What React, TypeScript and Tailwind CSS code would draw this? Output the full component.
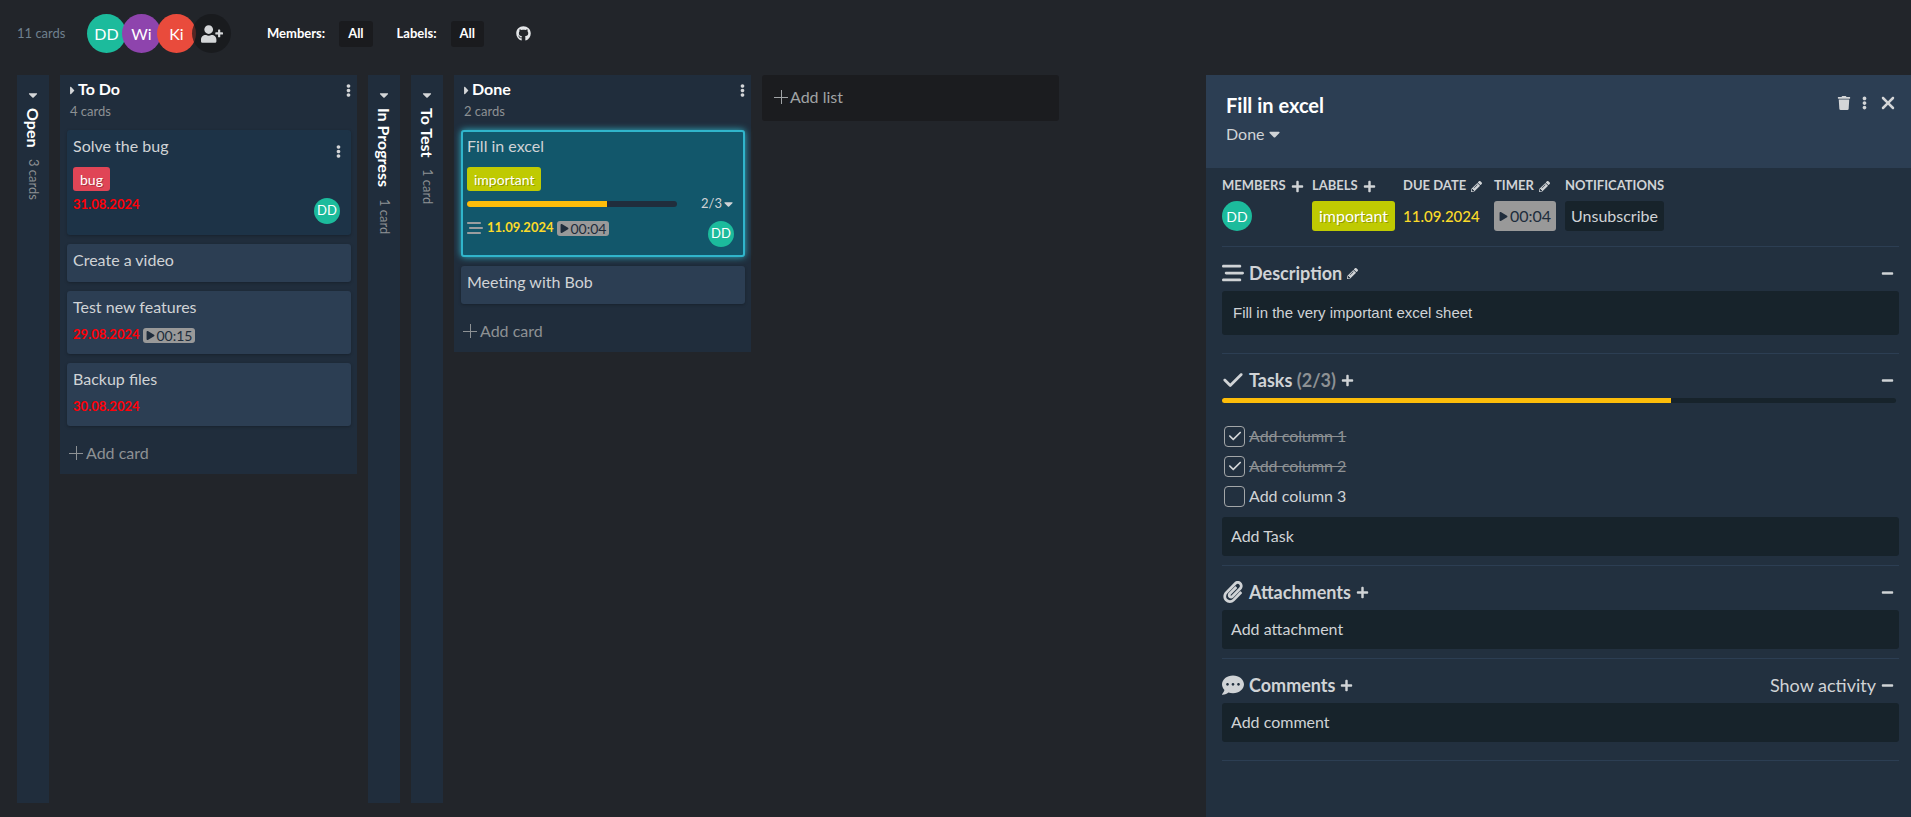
import type { ReactNode } from "react";
import clsx from "clsx";
import { FaCaretDown, FaCaretRight, FaCommentDots, FaEllipsisV, FaGithub, FaMinus, FaPaperclip, FaPencilAlt, FaPlay, FaPlus, FaTrash, FaUserPlus } from "react-icons/fa";
import { FaBarsStaggered, FaCheck, FaXmark } from "react-icons/fa6";

interface CardData {
  title: string;
  label?: { name: string; className: string };
  progress?: { done: number; total: number };
  hasDescription?: boolean;
  dueDate?: string;
  dueClass?: string;
  timer?: string;
  member?: string;
  menu?: boolean;
  variant?: "default" | "hover" | "active";
}

const IMPORTANT = { name: "important", className: "bg-[#bfca02]" };

const TODO_CARDS: CardData[] = [
  {
    title: "Solve the bug",
    label: { name: "bug", className: "bg-[#e04556]" },
    dueDate: "31.08.2024",
    dueClass: "text-[#ff0008]",
    member: "DD",
    menu: true,
    variant: "hover",
  },
  { title: "Create a video" },
  { title: "Test new features", dueDate: "29.08.2024", dueClass: "text-[#ff0008]", timer: "00:15" },
  { title: "Backup files", dueDate: "30.08.2024", dueClass: "text-[#ff0008]" },
];

const DONE_CARDS: CardData[] = [
  {
    title: "Fill in excel",
    label: IMPORTANT,
    progress: { done: 2, total: 3 },
    hasDescription: true,
    dueDate: "11.09.2024",
    dueClass: "text-[#fbdb29]",
    timer: "00:04",
    member: "DD",
    variant: "active",
  },
  { title: "Meeting with Bob" },
];

const TASKS = [
  { name: "Add column 1", done: true },
  { name: "Add column 2", done: true },
  { name: "Add column 3", done: false },
];

function ThinPlus() {
  return (
    <svg className="size-[14px] shrink-0" viewBox="0 0 14 14" fill="none" stroke="currentColor" strokeWidth="1" aria-hidden="true">
      <path d="M7.5 0v14M0 7.5h14" />
    </svg>
  );
}

function ProgressBar({ done, total, className }: { done: number; total: number; className: string }) {
  return (
    <div className={clsx("overflow-hidden rounded-full", className)}>
      <div className="h-full bg-[#fdbd0a]" style={{ width: `${(done / total) * 100}%` }} />
    </div>
  );
}

function Card({ card }: { card: CardData }) {
  const { title, label, progress, hasDescription, dueDate, dueClass, timer, member, menu, variant = "default" } = card;

  return (
    <article
      className={clsx(
        "rounded-[3px] border-2 px-1 pt-1",
        variant === "default" && "border-[#2c3e53] bg-[#2c3e53] pb-[7px] shadow-[0_1px_3px_rgba(0,0,0,0.25)]",
        variant === "hover" && "border-[#1d3347] bg-[#1d3347] pb-1.5 shadow-[0_1px_3px_rgba(0,0,0,0.25)]",
        variant === "active" && "border-[#30b5cb] bg-[#12576b] pb-[5px] shadow-[0_0_7px_#30b5cb]",
      )}
    >
      <div className={clsx("flex h-5 items-center justify-between", !dueDate && "mb-[3px]")}>
        <h3 className="text-base text-[#d0d3d6]">{title}</h3>
        {menu && (
          <button type="button" aria-label="Card actions" className="mt-2.5 mr-1 text-[13px] text-[#d4d6d8]">
            <FaEllipsisV className="w-[5px]" />
          </button>
        )}
      </div>

      {label && (
        <div className="mt-[11px] flex">
          <span className={clsx("flex h-6 items-center rounded-[3px] px-[7px] text-[14px] text-white [text-shadow:1px_1px_0_rgba(0,0,0,0.25)]", label.className)}>
            {label.name}
          </span>
        </div>
      )}

      {progress && (
        <div className="mt-[3px] flex h-5 items-center">
          <ProgressBar done={progress.done} total={progress.total} className="h-1.5 w-[210px] bg-[#202d3c]" />
          <button type="button" className="mr-1.5 ml-auto flex items-center gap-0.5 text-[13px] text-[#d0d3d6]">
            {progress.done}/{progress.total}
            <FaCaretDown className="w-[9px] text-[14px]" />
          </button>
        </div>
      )}

      {dueDate && (
        <div className={clsx("flex items-start", progress || label ? "mt-1" : "mt-2", member && "mb-[3px]")}>
          <div className="flex h-5 items-center gap-[3px]">
            {hasDescription && <FaBarsStaggered className="mr-px text-base text-[#9a9d9f]" />}
            <span className={clsx("text-[13px] font-bold", dueClass)}>{dueDate}</span>
            {timer && <Timer value={timer} className="h-[15px] px-[3px] text-[14px]" />}
          </div>
          {member && (
            <span className="mt-[3px] mr-[5px] ml-auto flex size-[26px] items-center justify-center rounded-full bg-[#1cbb9c] text-[13px] text-white">
              {member}
            </span>
          )}
        </div>
      )}
    </article>
  );
}

function Timer({ value, className }: { value: string; className: string }) {
  return (
    <button type="button" className={clsx("flex items-center gap-0.5 rounded-[3px] bg-[#999] text-[#202d3c]", className)}>
      <FaPlay className="size-[9px]" />
      {value}
    </button>
  );
}

function List({ name, cards }: { name: string; cards: CardData[] }) {
  return (
    <section className="w-[297px] shrink-0 self-start bg-[#202d3c] pr-1.5 pl-[7px]">
      <header className="h-[55px] pt-[5px] pl-[3px]">
        <div className="flex h-5 items-center">
          <button type="button" aria-label="Collapse list" className="text-[13px] text-[#d4d6d8]">
            <FaCaretRight className="w-[5px]" />
          </button>
          <h2 className="-mt-0.5 ml-[3px] text-base font-bold text-white">{name}</h2>
          <button type="button" aria-label="List actions" className="ml-auto text-[13px] text-[#d4d6d8]">
            <FaEllipsisV className="w-[5px]" />
          </button>
        </div>
        <p className="mt-px text-[13px] leading-5 text-[#8d9194]">{cards.length} cards</p>
      </header>
      <div className="flex flex-col gap-[9px]">
        {cards.map((card) => (
          <Card key={card.title} card={card} />
        ))}
      </div>
      <button type="button" className="flex h-12 w-full items-center gap-[3px] pt-1.5 pl-0.5 text-base text-[#8d9194]">
        <ThinPlus />
        Add card
      </button>
    </section>
  );
}

function CollapsedList({ name, count }: { name: string; count: string }) {
  return (
    <section className="flex w-8 shrink-0 flex-col items-center bg-[#202d3c] pt-[13px]">
      <button type="button" aria-label={`Expand ${name}`} className="text-sm text-[#d4d6d8]">
        <FaCaretDown />
      </button>
      <h2 className="mt-1.5 text-base font-bold text-white [writing-mode:vertical-rl]">{name}</h2>
      <p className="mt-3 text-[13px] text-[#8d9194] [writing-mode:vertical-rl]">{count}</p>
    </section>
  );
}

function StatColumn({ title, icon, children, className }: { title: string; icon?: ReactNode; children: ReactNode; className?: string }) {
  return (
    <div className={className}>
      <div className="flex h-5 items-center gap-[5px] text-[13px] font-bold whitespace-nowrap text-[#d0d3d6] uppercase">
        {title}
        {icon && (
          <button type="button" aria-label={`Edit ${title}`} className="text-[13px]">
            {icon}
          </button>
        )}
      </div>
      <div className="mt-[5px] flex h-[30px] items-center">{children}</div>
    </div>
  );
}

interface SectionProps {
  title: string;
  icon: ReactNode;
  count?: string;
  action: ReactNode;
  extra?: ReactNode;
  tall?: boolean;
  children: ReactNode;
}

function Section({ title, icon, count, action, extra, tall, children }: SectionProps) {
  return (
    <section className={clsx("border-b border-[#2c3e53] pt-3.5", tall ? "pb-[18px]" : "pb-[9px]")}>
      <header className="mb-1.5 flex h-6 items-center text-[#d0d3d6]">
        <span className="flex w-[27px] text-[22px]">{icon}</span>
        <h3 className="text-lg font-bold">
          {title}
          {count && <span className="text-[#8d9194]"> {count}</span>}
        </h3>
        <button type="button" aria-label={`Edit ${title}`} className="ml-[5px] text-[13px]">
          {action}
        </button>
        <div className="mr-[5px] ml-auto flex items-center gap-[5px]">
          {extra}
          <button type="button" aria-label={`Hide ${title}`} className="text-[13px]">
            <FaMinus />
          </button>
        </div>
      </header>
      {children}
    </section>
  );
}

function BoxButton({ children }: { children: ReactNode }) {
  return (
    <button type="button" className="flex h-[39px] w-full items-center rounded-[3px] bg-[#17232b] px-[9px] pb-0.5 text-base text-[#d0d3d6]">
      {children}
    </button>
  );
}

function CardDetails() {
  return (
    <aside className="w-[705px] shrink-0 bg-[#22303f]">
      <header className="flex justify-between bg-[#2c3e53] pt-[18px] pr-[13px] pb-6 pl-5">
        <div>
          <h2 className="text-xl leading-6 font-bold text-white">Fill in excel</h2>
          <button type="button" className="mt-[7px] flex h-5 items-center gap-1 text-base text-[#d0d3d6]">
            Done
            <FaCaretDown className="w-[11px] text-lg" />
          </button>
        </div>
        <div className="flex h-5 items-center gap-[11px] text-[#d4d6d8]">
          <button type="button" aria-label="Delete card" className="text-[14px]">
            <FaTrash />
          </button>
          <button type="button" aria-label="Card actions" className="text-[14px]">
            <FaEllipsisV className="w-[5px]" />
          </button>
          <button type="button" aria-label="Close" className="text-xl">
            <FaXmark />
          </button>
        </div>
      </header>

      <div className="pr-3 pl-4">
        <div className="flex gap-2 border-b border-[#2c3e53] pt-2 pb-[15px]">
          <StatColumn title="Members" icon={<FaPlus />} className="w-[82px]">
            <span className="flex size-[30px] items-center justify-center rounded-full bg-[#1cbb9c] text-[14px] text-white">DD</span>
          </StatColumn>
          <StatColumn title="Labels" icon={<FaPlus />} className="w-[83px]">
            <span className={clsx("flex h-full items-center rounded-[3px] px-[7px] text-base text-white [text-shadow:1px_1px_0_rgba(0,0,0,0.25)]", IMPORTANT.className)}>
              {IMPORTANT.name}
            </span>
          </StatColumn>
          <StatColumn title="Due date" icon={<FaPencilAlt className="size-[11px]" />} className="w-[83px]">
            <span className="text-[15px] font-medium text-[#fbdb29]">11.09.2024</span>
          </StatColumn>
          <StatColumn title="Timer" icon={<FaPencilAlt className="size-[11px]" />} className="w-[63px]">
            <Timer value="00:04" className="h-full px-[5px] text-base" />
          </StatColumn>
          <StatColumn title="Notifications">
            <button type="button" className="h-full rounded-[3px] bg-[#17232b] px-1.5 text-base text-[#d0d3d6]">
              Unsubscribe
            </button>
          </StatColumn>
        </div>

        <Section title="Description" icon={<FaBarsStaggered />} action={<FaPencilAlt className="size-[11px]" />} tall>
          <p className="flex h-11 items-center rounded-[3px] bg-[#17232b] px-[11px] font-['Liberation_Sans',Arial,sans-serif] text-[15px] text-[#d0d3d6]">
            Fill in the very important excel sheet
          </p>
        </Section>

        <Section title="Tasks" icon={<FaCheck />} count="(2/3)" action={<FaPlus />}>
          <ProgressBar done={2} total={3} className="mr-[3px] h-[5px] bg-[#17232b]" />
          <ul className="mt-[18px] mb-1.5">
            {TASKS.map((task) => (
              <li key={task.name}>
                <label className="flex h-[30px] items-center gap-1 pl-0.5">
                  <span className="relative flex">
                    <input type="checkbox" defaultChecked={task.done} className="peer size-[21px] appearance-none rounded-[4px] border border-[#a3a6a8]" />
                    <FaCheck className="pointer-events-none absolute inset-0 m-auto hidden text-sm text-[#d4d6d8] peer-checked:block" />
                  </span>
                  <span className={clsx("text-base", task.done ? "text-[#8d9194] line-through" : "text-[#d0d3d6]")}>{task.name}</span>
                </label>
              </li>
            ))}
          </ul>
          <BoxButton>Add Task</BoxButton>
        </Section>

        <Section title="Attachments" icon={<FaPaperclip />} action={<FaPlus />}>
          <BoxButton>Add attachment</BoxButton>
        </Section>

        <Section
          title="Comments"
          icon={<FaCommentDots />}
          action={<FaPlus />}
          extra={
            <button type="button" className="text-lg">
              Show activity
            </button>
          }
          tall
        >
          <BoxButton>Add comment</BoxButton>
        </Section>
      </div>
    </aside>
  );
}

function BoardHeader() {
  const avatar = "flex size-[39px] items-center justify-center rounded-full text-base text-white";

  return (
    <header className="flex h-[67px] items-center pl-[17px] text-[13px]">
      <span className="w-[70px] text-[#6f808e]">11 cards</span>
      <div className="flex -space-x-1">
        <span className={clsx(avatar, "bg-[#1cbb9c]")}>DD</span>
        <span className={clsx(avatar, "bg-[#8e44ad]")}>Wi</span>
        <span className={clsx(avatar, "bg-[#e94b3c]")}>Ki</span>
        <button type="button" aria-label="Add member" className={clsx(avatar, "bg-[#16171a]/70")}>
          <FaUserPlus className="text-[22px] text-[#d4d6d8]" />
        </button>
      </div>
      <span className="ml-9 font-bold text-white">Members:</span>
      <button type="button" className="ml-3.5 h-[26px] rounded-[3px] bg-[#1a1b1e] px-[9px] font-bold text-white">
        All
      </button>
      <span className="ml-6 font-bold text-white">Labels:</span>
      <button type="button" className="ml-3.5 h-[26px] rounded-[3px] bg-[#1a1b1e] px-[9px] font-bold text-white">
        All
      </button>
      <a href="#github" aria-label="GitHub" className="ml-8 text-[15px] text-[#e4e6e8]">
        <FaGithub />
      </a>
    </header>
  );
}

export default function App() {
  return (
    <div className="flex min-h-screen flex-col bg-[#22252a] font-[Lato,sans-serif]">
      <BoardHeader />
      <main className="flex grow pt-2">
        <div className="flex grow gap-[11px] pb-3.5 pl-[17px]">
          <CollapsedList name="Open" count="3 cards" />
          <List name="To Do" cards={TODO_CARDS} />
          <CollapsedList name="In Progress" count="1 card" />
          <CollapsedList name="To Test" count="1 card" />
          <List name="Done" cards={DONE_CARDS} />
          <button type="button" className="flex h-[46px] w-[297px] shrink-0 items-center gap-0.5 self-start rounded-[3px] bg-[#1b1c1f] px-3 pb-0.5 text-base text-[#a0a3a5]">
            <ThinPlus />
            Add list
          </button>
        </div>
        <CardDetails />
      </main>
    </div>
  );
}
